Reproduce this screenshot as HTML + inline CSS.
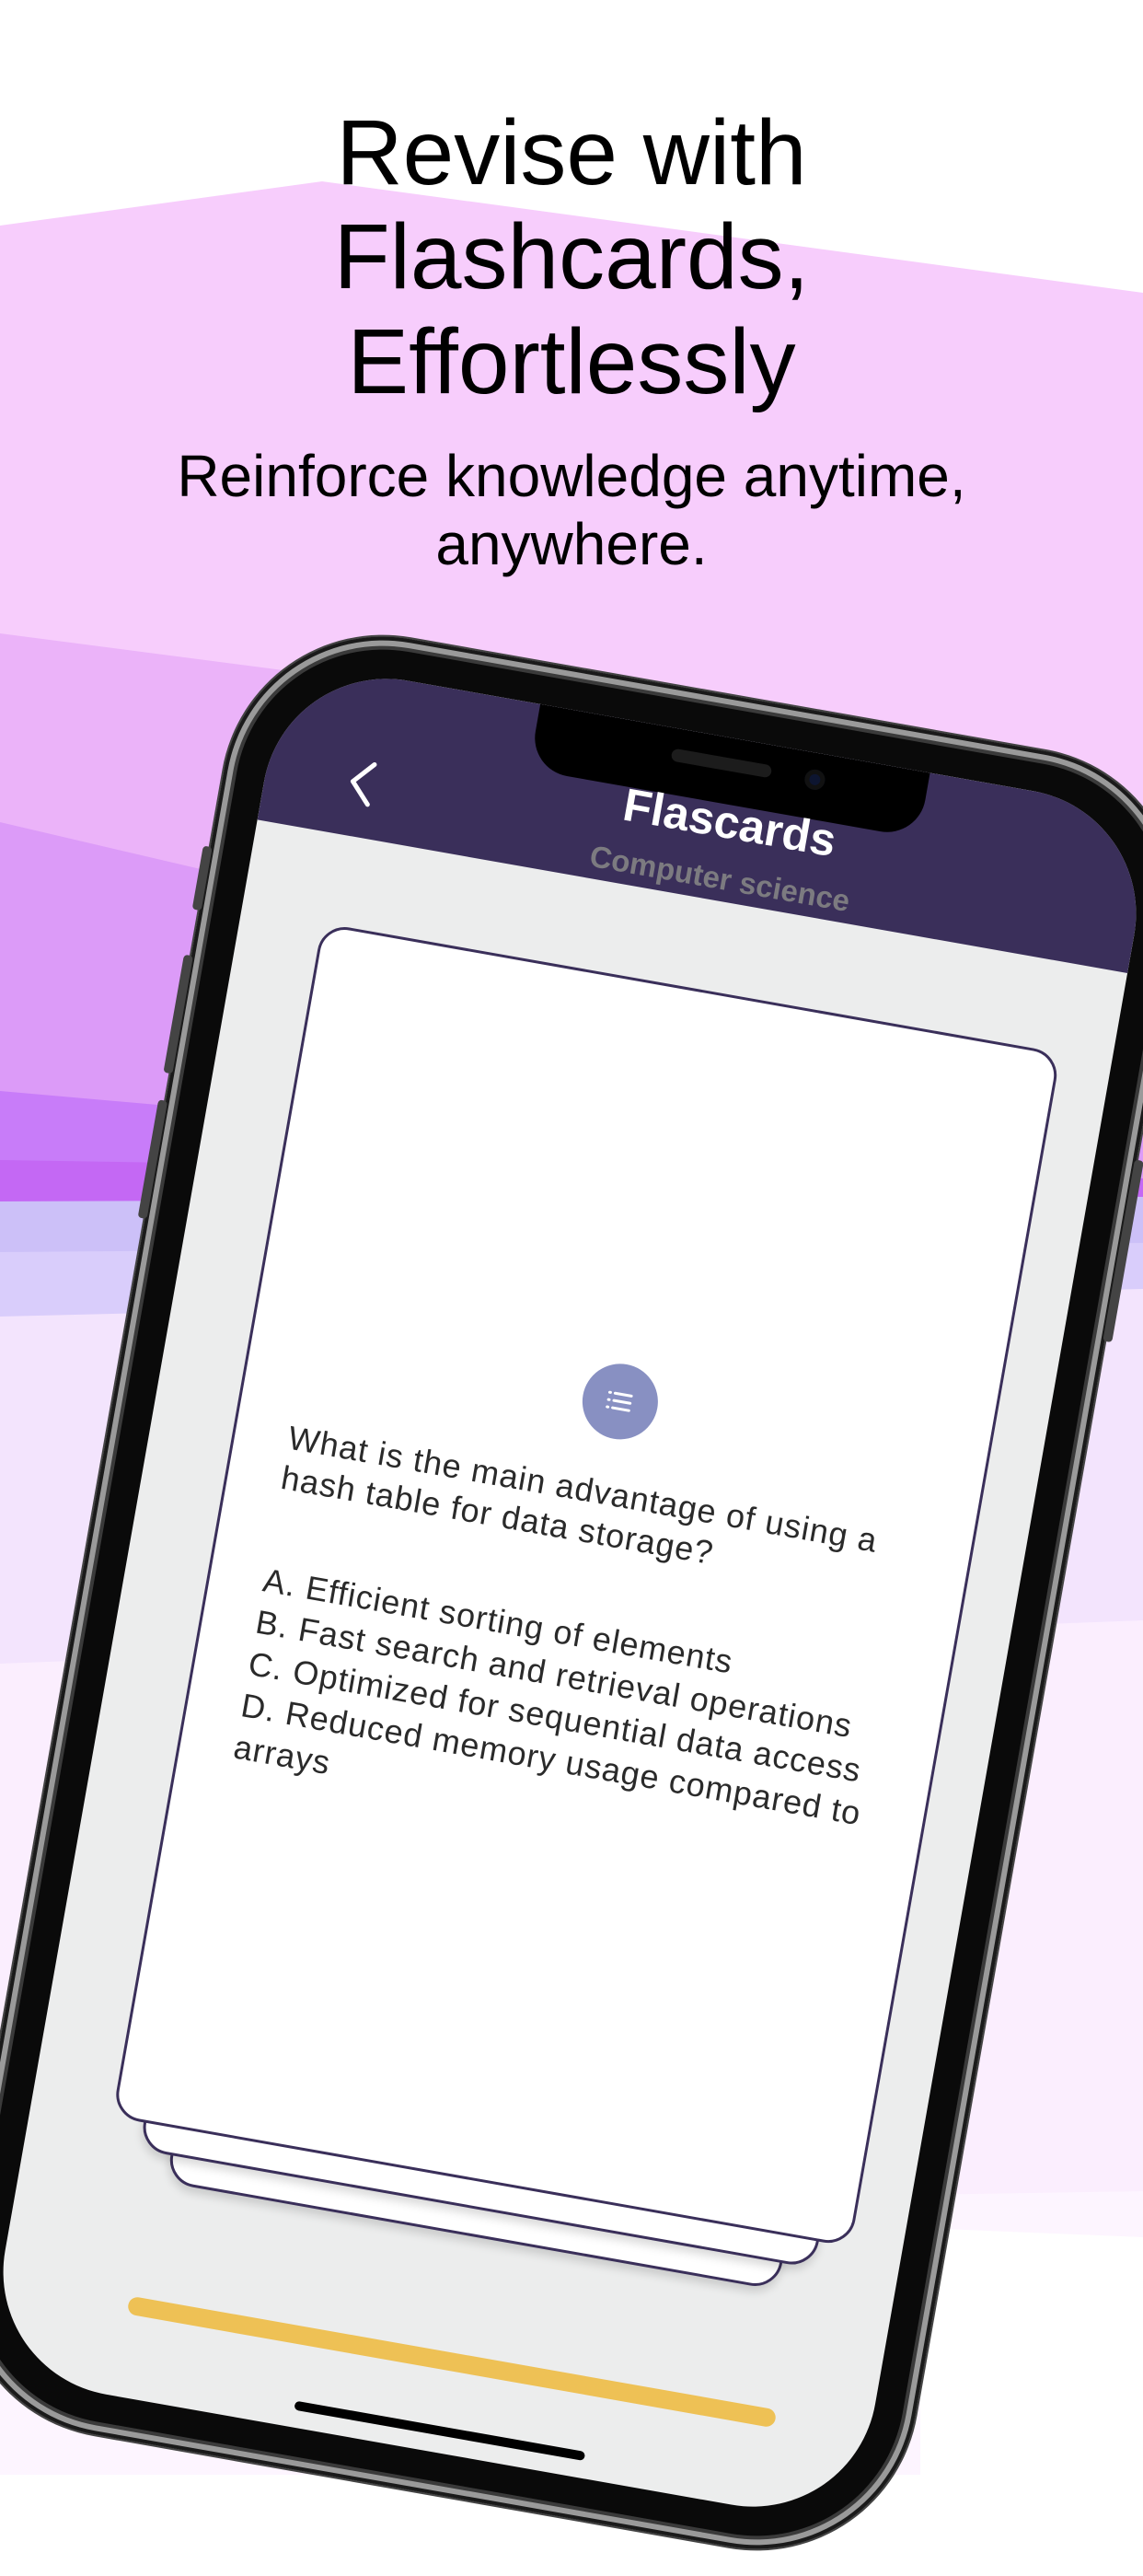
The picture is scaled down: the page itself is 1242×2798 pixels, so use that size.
<!DOCTYPE html>
<html><head><meta charset="utf-8">
<style>
*{margin:0;padding:0;box-sizing:border-box}
html,body{width:1242px;height:2688px;overflow:hidden;background:#fff;font-family:"Liberation Sans",sans-serif}
.bg{position:absolute;left:0;top:0}
.t{position:absolute;left:0;width:1242px;text-align:center;color:#000}
.h{font-size:100px;line-height:113px}
.s{font-size:64px;line-height:74px}
.phone{position:absolute;left:94px;top:740px;width:1050px;height:1980px;border-radius:175px;background:#0a0a0a;transform:rotate(10deg);transform-origin:50% 50%;
box-shadow:inset 0 0 0 4px #1a1a1a,inset 0 0 0 10px #9a9a9a,inset 0 0 0 14px #3a3a3a,0 0 0 2px #444}
.btn{position:absolute;background:#444;border-radius:4px;width:10px;left:-8px}
.screen{position:absolute;left:45px;top:45px;right:45px;bottom:45px;border-radius:135px;background:#eceded;overflow:hidden}
.hdr{position:absolute;left:0;top:0;width:100%;height:177px;background:#3a2f5a}
.notch{position:absolute;left:281px;top:0;width:430px;height:72px;background:#000;border-radius:0 0 42px 42px}
.spk{position:absolute;left:150px;top:22px;width:110px;height:14px;border-radius:7px;background:#1c1c1c}
.cam{position:absolute;left:297px;top:18px;width:22px;height:22px;border-radius:50%;background:#0d1530;box-shadow:inset 0 0 0 5px #111}
.title{position:absolute;width:100%;text-align:center;color:#fff;font-weight:bold;font-size:50px;top:62px;left:26px}
.sub{position:absolute;left:26px;width:100%;text-align:center;color:#7c7b80;font-weight:bold;font-size:33px;top:134px}
.chev{position:absolute;left:85px;top:88px}
.card{position:absolute;background:#fff;border:3px solid #3a2f5a;border-radius:30px}
.ic{position:absolute;left:457px;top:690px;width:82px;height:82px;border-radius:50%;background:#8890c2}
.txt{position:absolute;left:150px;width:720px;font-size:36px;letter-spacing:1px;color:#2a2a2a;line-height:44px;white-space:nowrap}
.bar{position:absolute;left:142px;top:1780px;width:714px;height:20px;border-radius:10px;background:#eec155}
.home{position:absolute;left:339px;top:1861px;width:320px;height:10px;border-radius:5px;background:#000}
</style></head><body>
<svg class="bg" width="1242" height="2688" viewBox="0 0 1242 2688">
<rect width="1242" height="2688" fill="#fff"/>
<polygon points="0,245 350,197 1242,318 1242,2688 0,2688" fill="#f7cdfc"/>
<polygon points="0,688 400,740 1242,900 1242,2688 0,2688" fill="#ebb3f9"/>
<polygon points="0,893 500,1010 1242,1200 1242,2688 0,2688" fill="#dc9bf8"/>
<polygon points="0,1185 400,1220 1242,1290 1242,2688 0,2688" fill="#c87cf9"/>
<polygon points="0,1260 1242,1280 1242,2688 0,2688" fill="#c468f4"/>
<polygon points="0,1305 1242,1300 1242,2688 0,2688" fill="#ccc0f8"/>
<polygon points="0,1360 1242,1350 1242,2688 0,2688" fill="#d9cdfb"/>
<polygon points="0,1430 1242,1400 1242,2688 0,2688" fill="#f3e4fd"/>
<polygon points="0,1807 1242,1760 1242,2688 0,2688" fill="#fbeefe"/>
<polygon points="0,2400 1242,2380 1242,2688 0,2688" fill="#fdf5ff"/>
<polygon points="1000,2420 1242,2430 1242,2688 1000,2688" fill="#fff"/>
</svg>
<div class="t h" style="top:110px">Revise with</div>
<div class="t h" style="top:223px">Flashcards,</div>
<div class="t h" style="top:337px">Effortlessly</div>
<div class="t s" style="top:480px">Reinforce knowledge anytime,</div>
<div class="t s" style="top:554px">anywhere.</div>

<div class="phone">
<div class="btn" style="top:260px;height:70px"></div>
<div class="btn" style="top:380px;height:130px"></div>
<div class="btn" style="top:540px;height:130px"></div>
<div class="btn" style="left:1048px;top:420px;height:200px"></div>
<div class="screen">
<div class="hdr"></div>
<div class="notch"><div class="spk"></div><div class="cam"></div></div>
<svg class="chev" width="40" height="60" viewBox="0 0 40 60"><path d="M30 8 L10 30 L30 52" fill="none" stroke="#fff" stroke-width="5" stroke-linecap="round" stroke-linejoin="round"/></svg>
<div class="title">Flascards</div>
<div class="sub">Computer science</div>
<div class="card" style="left:159px;top:300px;width:675px;height:1352px;box-shadow:0 6px 10px rgba(0,0,0,.15)"></div>
<div class="card" style="left:124px;top:290px;width:745px;height:1332px;box-shadow:0 6px 10px rgba(0,0,0,.15)"></div>
<div class="card" style="left:89px;top:275px;width:815px;height:1317px"></div>
<div class="ic"><svg width="82" height="82" viewBox="0 0 82 82"><g stroke="#fff" stroke-width="3" stroke-linecap="round"><line x1="34" y1="33" x2="52" y2="33"/><line x1="34" y1="41" x2="52" y2="41"/><line x1="34" y1="49" x2="52" y2="49"/><line x1="28" y1="33" x2="29" y2="33"/><line x1="28" y1="41" x2="29" y2="41"/><line x1="28" y1="49" x2="29" y2="49"/></g></svg></div>
<div class="txt" style="top:810px">What is the main advantage of using a<br>hash table for data storage?</div>
<div class="txt" style="top:966px;line-height:46px">A. Efficient sorting of elements<br>B. Fast search and retrieval operations<br>C. Optimized for sequential data access<br>D. Reduced memory usage compared to<br>arrays</div>
<div class="bar"></div>
<div class="home"></div>
</div>
</div>
</body></html>
